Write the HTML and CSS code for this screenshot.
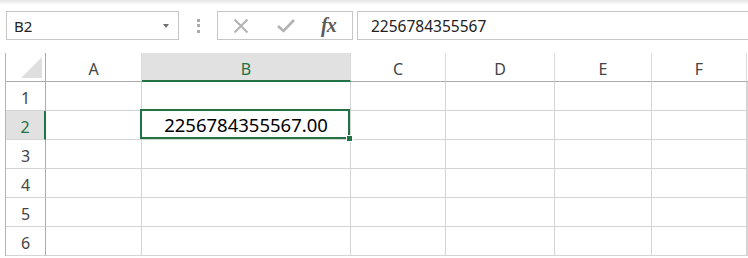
FILE: index.html
```html
<!DOCTYPE html>
<html lang="en">
<head>
    <meta charset="UTF-8">
    <title>Sheet</title>
    <link rel="stylesheet" href="styles.css">
</head>
<body>
    <div class="formula-bar">
        <div class="name-box">
            <span>B2</span>
            <span class="caret"></span>
        </div>
        <div class="grip"><i></i><i></i><i></i></div>
        <div class="fx-buttons">
            <svg class="icon" width="16" height="16" viewBox="0 0 16 16">
                <path d="M1.5 1.5 L14.5 14.5 M14.5 1.5 L1.5 14.5" stroke="#b3b3b3" stroke-width="2" fill="none"/>
            </svg>
            <svg class="icon" width="18" height="15" viewBox="0 0 18 15">
                <path d="M1 8 L6.5 13 L17 2" stroke="#b3b3b3" stroke-width="2.6" fill="none"/>
            </svg>
            <span class="fx">fx</span>
        </div>
        <div class="formula-input">2256784355567</div>
    </div>

    <div class="sheet">
        <div class="corner"><span class="corner-tri"></span></div>
        <div class="col-head">A</div>
        <div class="col-head selected">B</div>
        <div class="col-head">C</div>
        <div class="col-head">D</div>
        <div class="col-head">E</div>
        <div class="col-head">F</div>
        <div class="col-head last"></div>

        <div class="row-head">1</div>
        <div class="cell"></div><div class="cell"></div><div class="cell"></div><div class="cell"></div><div class="cell"></div><div class="cell"></div><div class="cell"></div>

        <div class="row-head selected">2</div>
        <div class="cell"></div>
        <div class="cell active">
            2256784355567.00
            <div class="selection"><span class="handle"></span></div>
        </div>
        <div class="cell"></div><div class="cell"></div><div class="cell"></div><div class="cell"></div><div class="cell"></div>

        <div class="row-head">3</div>
        <div class="cell"></div><div class="cell"></div><div class="cell"></div><div class="cell"></div><div class="cell"></div><div class="cell"></div><div class="cell"></div>

        <div class="row-head">4</div>
        <div class="cell"></div><div class="cell"></div><div class="cell"></div><div class="cell"></div><div class="cell"></div><div class="cell"></div><div class="cell"></div>

        <div class="row-head">5</div>
        <div class="cell"></div><div class="cell"></div><div class="cell"></div><div class="cell"></div><div class="cell"></div><div class="cell"></div><div class="cell"></div>

        <div class="row-head">6</div>
        <div class="cell"></div><div class="cell"></div><div class="cell"></div><div class="cell"></div><div class="cell"></div><div class="cell"></div><div class="cell"></div>
    </div>
</body>
</html>
```

FILE: styles.css
```css
body {
    margin: 0;
    padding: 0;
    background: #fff;
    font-family: "Noto Sans", "Open Sans", sans-serif;
    overflow: hidden;
}
.formula-bar {
    display: flex;
    height: 53px;
    box-sizing: border-box;
    padding-top: 11px;
    padding-bottom: 13px;
    background: linear-gradient(#e4e4e4, #fff 5px);
}
.name-box {
    display: flex;
    align-items: center;
    justify-content: space-between;
    width: 173px;
    margin-left: 6px;
    box-sizing: border-box;
    border: 1px solid #c6c6c6;
    padding: 0 9px 0 7px;
    font-size: 15px;
    color: #222;
    background: #fff;
}
.caret {
    width: 0;
    height: 0;
    border-left: 3.5px solid transparent;
    border-right: 3.5px solid transparent;
    border-top: 4px solid #6f6f6f;
}
.grip {
    width: 38px;
    display: flex;
    flex-direction: column;
    align-items: center;
    justify-content: center;
    gap: 2.5px;
}
.grip i {
    display: block;
    width: 3px;
    height: 3px;
    background: #ababab;
}
.fx-buttons {
    display: flex;
    align-items: center;
    width: 136px;
    box-sizing: border-box;
    border: 1px solid #c6c6c6;
    padding-left: 15px;
    background: #fff;
}
.fx-buttons .icon {
    margin-right: 28px;
}
.fx-buttons .icon + .icon {
    margin-right: 26px;
}
.fx {
    font-family: "Liberation Serif", serif;
    font-style: italic;
    font-weight: bold;
    font-size: 20px;
    color: #5a5a5a;
    letter-spacing: -1px;
}
.formula-input {
    flex: 1;
    margin-left: 4px;
    margin-right: -2px;
    box-sizing: border-box;
    border: 1px solid #c6c6c6;
    padding-left: 13px;
    display: flex;
    align-items: center;
    font-size: 15.5px;
    color: #222;
    background: #fff;
}
.sheet {
    display: grid;
    grid-template-columns: 40px 96px 209px 95px 109px 97px 95px 1fr;
    grid-auto-rows: 29px;
    margin-left: 5px;
    border-left: 1px solid #b4b4b4;
}
.corner,
.col-head,
.row-head,
.cell {
    box-sizing: border-box;
    border-right: 1px solid #d4d4d4;
    border-bottom: 1px solid #d4d4d4;
}
.corner {
    position: relative;
    border-bottom-color: #ababab;
    border-right-color: #ababab;
}
.corner-tri {
    position: absolute;
    right: 3px;
    bottom: 3px;
    width: 0;
    height: 0;
    border-left: 21px solid transparent;
    border-bottom: 21px solid #dfdfdf;
}
.col-head,
.row-head {
    font-size: 16px;
    color: #444;
    text-align: center;
    line-height: 26px;
    padding-top: 3px;
}
.col-head {
    border-bottom-color: #ababab;
    border-right-color: #dadada;
}
.col-head.last {
    border-right: none;
}
.row-head {
    border-right-color: #ababab;
}
.col-head.selected {
    background: #e1e1e1;
    color: #217346;
    border-bottom: 2px solid #217346;
}
.row-head.selected {
    background: #e1e1e1;
    color: #217346;
    border-right: 2px solid #217346;
}
.cell.active {
    position: relative;
    text-align: center;
    font-size: 18.5px;
    line-height: 27px;
    color: #000;
}
.selection {
    position: absolute;
    top: -2px;
    left: -2px;
    right: 0;
    bottom: 0;
    border: 2px solid #217346;
}
.handle {
    position: absolute;
    right: -4px;
    bottom: -4px;
    width: 5px;
    height: 5px;
    background: #217346;
    box-shadow: 0 0 0 1px #fff;
}
```
